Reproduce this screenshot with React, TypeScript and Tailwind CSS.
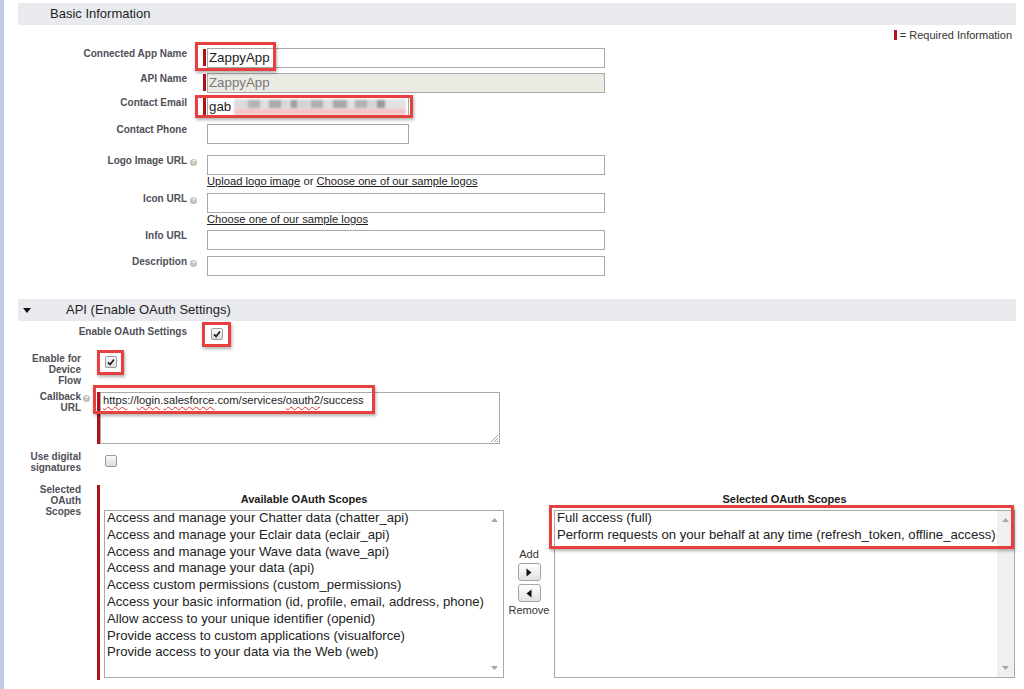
import React from "react";

const FONT = "font-['Liberation_Sans',Arial,Helvetica,sans-serif]";

function Help() {
  return (
    <span className="inline-flex items-center justify-center w-[7px] h-[7px] rounded-full bg-[#c0c0b2] text-white text-[6px] font-bold leading-none align-[0px]">
      ?
    </span>
  );
}

// Red outline drawn on top of a field to call it out
function Highlight({ className }: { className: string }) {
  return (
    <div
      className={`pointer-events-none absolute border-[3px] border-[#e6403f] shadow-[1px_2px_3px_rgba(0,0,0,0.3)] ${className}`}
    />
  );
}

function RequiredBar({ className }: { className: string }) {
  return <div className={`w-[3px] shrink-0 bg-[#b0121b] ${className}`} />;
}

function Label({ text, help }: { text: string; help?: boolean }) {
  return (
    <div className="w-[169px] shrink-0 text-right text-[10px] leading-[12px] font-bold text-[#4f4f58]">
      {text}
      {help && (
        <span className="inline-block ml-[3px] -mr-[10px]">
          <Help />
        </span>
      )}
    </div>
  );
}

function NarrowLabel({ lines, help }: { lines: string[]; help?: boolean }) {
  return (
    <div className="w-[63px] shrink-0 text-right text-[10px] leading-[11px] font-bold text-[#4f4f58]">
      {lines.map((l, i) => (
        <div key={l}>
          {l}
          {help && i === 0 && (
            <span className="inline-block ml-[2px] -mr-[9px]">
              <Help />
            </span>
          )}
        </div>
      ))}
    </div>
  );
}

function Field({
  width,
  children,
  disabled,
}: {
  width: string;
  children?: React.ReactNode;
  disabled?: boolean;
}) {
  return (
    <div
      className={`${width} h-[20px] border border-[#a9a9a9] flex items-center pl-[1px] text-[13.3px] leading-[16px] ${
        disabled ? "bg-[#ebebe4] text-[#7a7a7a]" : "bg-white text-[#222]"
      }`}
    >
      {children}
    </div>
  );
}

function Checkbox({ checked }: { checked?: boolean }) {
  return (
    <div className="w-[12px] h-[12px] rounded-[2px] border border-[#9b9b9b] bg-linear-to-b from-[#fbfbfb] to-[#dcdcdc] flex items-center justify-center">
      {checked && (
        <svg width="8" height="8" viewBox="0 0 8 8">
          <path d="M1 4.3 L3.1 6.4 L7 1.4" stroke="#1d1d1d" strokeWidth="1.7" fill="none" />
        </svg>
      )}
    </div>
  );
}

function Arrow({ up }: { up?: boolean }) {
  return (
    <svg width="7" height="4" viewBox="0 0 7 4">
      <path d={up ? "M0 4 L3.5 0 L7 4Z" : "M0 0 L3.5 4 L7 0Z"} fill="#a6a6a6" />
    </svg>
  );
}

function ListBox({ items, track }: { items: string[]; track: string }) {
  return (
    <div className="h-[168px] border border-[#a9a9a9] bg-white flex overflow-hidden">
      <div className="flex-1 pl-[2px] -mt-[1px] text-[13.15px] leading-[16.8px] text-[#222] whitespace-nowrap">
        {items.map((it) => (
          <div key={it}>{it}</div>
        ))}
      </div>
      <div className={`w-[17px] shrink-0 flex flex-col items-center justify-between py-[7px] ${track}`}>
        <Arrow up />
        <Arrow />
      </div>
    </div>
  );
}

function MoveButton({ right }: { right?: boolean }) {
  return (
    <div className="w-[23px] h-[18px] rounded-[3px] border border-[#a5a5a5] bg-linear-to-b from-white to-[#e1e1e1] flex items-center justify-center">
      <svg width="6" height="9" viewBox="0 0 6 9">
        <path d={right ? "M0.5 0.5 L5.5 4.5 L0.5 8.5Z" : "M5.5 0.5 L0.5 4.5 L5.5 8.5Z"} fill="#111" />
      </svg>
    </div>
  );
}

const squiggle =
  "underline decoration-wavy decoration-[#e0322f] decoration-1 underline-offset-[2px]";

const available = [
  "Access and manage your Chatter data (chatter_api)",
  "Access and manage your Eclair data (eclair_api)",
  "Access and manage your Wave data (wave_api)",
  "Access and manage your data (api)",
  "Access custom permissions (custom_permissions)",
  "Access your basic information (id, profile, email, address, phone)",
  "Allow access to your unique identifier (openid)",
  "Provide access to custom applications (visualforce)",
  "Provide access to your data via the Web (web)",
];

const selected = [
  "Full access (full)",
  "Perform requests on your behalf at any time (refresh_token, offline_access)",
];

// masked part of the e-mail address
const mask: [string, string][] = [
  ["w-[14px]", "bg-[#dadada]"],
  ["w-[12px]", "bg-[#b4b4b4]"],
  ["w-[9px]", "bg-[#dedede]"],
  ["w-[12px]", "bg-[#aaaaaa]"],
  ["w-[10px]", "bg-[#d8d8d8]"],
  ["w-[6px]", "bg-[#9d9d9d]"],
  ["w-[14px]", "bg-[#d4d4d4]"],
  ["w-[12px]", "bg-[#b0b0b0]"],
  ["w-[10px]", "bg-[#dcdcdc]"],
  ["w-[14px]", "bg-[#a8a8a8]"],
  ["w-[8px]", "bg-[#e0e0e0]"],
  ["w-[12px]", "bg-[#b2b2b2]"],
  ["w-[10px]", "bg-[#d6d6d6]"],
  ["w-[8px]", "bg-[#9a9a9a]"],
];

export default function App() {
  return (
    <div className={`w-[1024px] h-[689px] overflow-hidden bg-white flex ${FONT}`}>
      <div className="w-[4px] shrink-0 bg-[#c0c9e6]" />
      <div className="flex-1 pl-[14px] pr-[8px]">
        {/* Basic Information */}
        <div className="mt-[3px] h-[22px] bg-[#e9eaee] flex items-center pl-[32px] text-[13px] text-[#1e1e1e]">
          Basic Information
        </div>
        <div className="h-[20px] flex items-center justify-end pr-[4px] text-[11px] text-[#333]">
          <span className="w-[3px] h-[10px] bg-[#b0121b] mr-[3px]" />= Required Information
        </div>

        <div className="flex items-start mt-[3px]">
          <Label text="Connected App Name" />
          <div className="ml-[16px] relative flex">
            <RequiredBar className="mt-[1px] h-[17px] mr-[1px]" />
            <Field width="w-[398px]">ZappyApp</Field>
            <Highlight className="left-[-8px] top-[-6px] w-[81px] h-[29px]" />
          </div>
        </div>

        <div className="flex items-start mt-[5px]">
          <Label text="API Name" />
          <div className="ml-[16px] flex">
            <RequiredBar className="mt-[1px] h-[17px] mr-[1px]" />
            <Field width="w-[398px]" disabled>
              ZappyApp
            </Field>
          </div>
        </div>

        <div className="flex items-start mt-[4px]">
          <Label text="Contact Email" />
          <div className="ml-[16px] relative flex">
            <RequiredBar className="mt-[1px] h-[17px] mr-[1px]" />
            <Field width="w-[202px]">
              <span>gab</span>
              <div className="ml-[3px] flex flex-col w-[172px] h-[16px] blur-[1px]">
                <div className="h-[10px] flex items-center bg-[#e3e3e3]">
                  {mask.map(([w, c], i) => (
                    <div key={i} className={`h-[8px] ${w} ${c}`} />
                  ))}
                </div>
                <div className="h-[6px] bg-[#f6c4c6]" />
              </div>
            </Field>
            <Highlight className="left-[-8px] top-[-2px] w-[218px] h-[23px]" />
          </div>
        </div>

        <div className="flex items-start mt-[7px]">
          <Label text="Contact Phone" />
          <div className="ml-[16px] pl-[4px]">
            <Field width="w-[202px]" />
          </div>
        </div>

        <div className="flex items-start mt-[11px]">
          <Label text="Logo Image URL" help />
          <div className="ml-[16px] pl-[4px] flex flex-col">
            <Field width="w-[398px]" />
            <div className="text-[11.2px] leading-[12px] text-[#222]">
              <span className="underline">Upload logo image</span> or{" "}
              <span className="underline">Choose one of our sample logos</span>
            </div>
          </div>
        </div>

        <div className="flex items-start mt-[6px]">
          <Label text="Icon URL" help />
          <div className="ml-[16px] pl-[4px] flex flex-col">
            <Field width="w-[398px]" />
            <div className="text-[11.2px] leading-[12px] text-[#222]">
              <span className="underline">Choose one of our sample logos</span>
            </div>
          </div>
        </div>

        <div className="flex items-start mt-[5px]">
          <Label text="Info URL" />
          <div className="ml-[16px] pl-[4px]">
            <Field width="w-[398px]" />
          </div>
        </div>

        <div className="flex items-start mt-[6px]">
          <Label text="Description" help />
          <div className="ml-[16px] pl-[4px]">
            <Field width="w-[398px]" />
          </div>
        </div>

        {/* API (Enable OAuth Settings) */}
        <div className="mt-[23px] h-[22px] bg-[#e9eaee] flex items-center text-[13px] text-[#1e1e1e]">
          <svg className="ml-[5px]" width="8" height="5" viewBox="0 0 8 5">
            <path d="M0 0 L8 0 L4 5Z" fill="#111" />
          </svg>
          <span className="ml-[35px]">API (Enable OAuth Settings)</span>
        </div>

        <div className="flex items-start mt-[4px]">
          <div className="pt-[1px]">
            <Label text="Enable OAuth Settings" />
          </div>
          <div className="ml-[24px] mt-[3px] relative">
            <Checkbox checked />
            <Highlight className="left-[-9px] top-[-6px] w-[29px] h-[25px]" />
          </div>
        </div>

        <div className="flex items-start mt-[12px]">
          <div className="pt-[1px]">
            <NarrowLabel lines={["Enable for", "Device", "Flow"]} />
          </div>
          <div className="ml-[24px] mt-[4px] relative">
            <Checkbox checked />
            <Highlight className="left-[-8px] top-[-6px] w-[27px] h-[25px]" />
          </div>
        </div>

        <div className="flex items-start mt-[5px]">
          <NarrowLabel lines={["Callback", "URL"]} help />
          <div className="ml-[16px] mt-[1px] relative flex">
            <RequiredBar className="h-[52px]" />
            <div className="w-[400px] h-[52px] border border-[#a9a9a9] bg-white relative px-[2px] pt-[1px] text-[11.2px] leading-[13px] text-[#222] whitespace-nowrap">
              <span className={squiggle}>https</span>://<span className={squiggle}>login</span>.
              <span className={squiggle}>salesforce</span>.com/services/
              <span className={squiggle}>oauth2</span>/success
              <svg className="absolute right-[1px] bottom-[1px]" width="8" height="8" viewBox="0 0 8 8">
                <path d="M1 8 L8 1 M4 8 L8 4 M7 8 L8 7" stroke="#8a8a8a" strokeWidth="0.8" />
              </svg>
            </div>
            <Highlight className="left-[-4px] top-[-7px] w-[282px] h-[29px]" />
          </div>
        </div>

        <div className="flex items-start mt-[7px]">
          <NarrowLabel lines={["Use digital", "signatures"]} />
          <div className="ml-[24px] mt-[4px]">
            <Checkbox />
          </div>
        </div>

        <div className="flex items-start mt-[11px]">
          <NarrowLabel lines={["Selected", "OAuth", "Scopes"]} />
          <RequiredBar className="ml-[16px] mt-[1px] h-[195px]" />
          <div className="ml-[4px] pt-[9px] flex items-start">
            <div className="w-[400px]">
              <div className="h-[13px] text-center text-[11px] leading-[13px] font-bold text-[#1a1a1a]">
                Available OAuth Scopes
              </div>
              <div className="mt-[4px]">
                <ListBox items={available} track="bg-white" />
              </div>
            </div>

            <div className="w-[50px] pt-[55px] flex flex-col items-center text-[11px] leading-[13px] text-[#333]">
              <div>Add</div>
              <div className="mt-[2px]">
                <MoveButton right />
              </div>
              <div className="mt-[3px]">
                <MoveButton />
              </div>
              <div className="mt-[2px]">Remove</div>
            </div>

            <div className="w-[461px]">
              <div className="h-[13px] text-center text-[11px] leading-[13px] font-bold text-[#1a1a1a]">
                Selected OAuth Scopes
              </div>
              <div className="mt-[4px] relative">
                <ListBox items={selected} track="bg-[#f0f0f0]" />
                <Highlight className="left-[-5px] top-[-5px] w-[465px] h-[44px]" />
              </div>
            </div>
          </div>
        </div>
      </div>
    </div>
  );
}
